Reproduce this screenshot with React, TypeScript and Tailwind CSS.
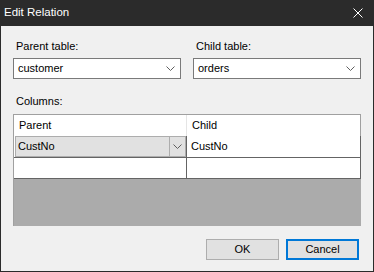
import React from "react";

function Chevron({ className = "" }: { className?: string }) {
    return (
        <svg width="9" height="5" viewBox="0 0 9 5" className={className}>
            <polyline points="0.5,0.5 4.5,4.5 8.5,0.5" fill="none" stroke="#5f5f5f" strokeWidth="1" />
        </svg>
    );
}

function Combo({ value }: { value: string }) {
    return (
        <div className="h-[21px] bg-white border border-[#7a7a7a] flex items-center justify-between pl-[4px] pr-[5px]">
            <span>{value}</span>
            <Chevron />
        </div>
    );
}

export default function App() {
    return (
        <div className="w-[374px] h-[272px] bg-[#2b2b2b] flex flex-col font-['Liberation_Sans',Arial,sans-serif] text-[11px] text-black">
            {/* title bar */}
            <div className="h-[26px] shrink-0 flex items-center justify-between pl-[4px] pr-[11px] text-white text-[11.5px]">
                <span>Edit Relation</span>
                <svg width="10" height="10" viewBox="0 0 10 10">
                    <path d="M0.5 0.5 L9.5 9.5 M9.5 0.5 L0.5 9.5" stroke="#ffffff" strokeWidth="1" />
                </svg>
            </div>

            <div className="flex-1 bg-[#f0f0f0] mx-[1px] mb-[1px] px-[12px] pt-[13px] flex flex-col">
                <div className="grid grid-cols-2 gap-x-[12px]">
                    <div>
                        <div className="h-[14px] leading-[14px] pl-[3px]">Parent table:</div>
                        <div className="mt-[5px]"><Combo value="customer" /></div>
                    </div>
                    <div>
                        <div className="h-[14px] leading-[14px] pl-[3px]">Child table:</div>
                        <div className="mt-[5px]"><Combo value="orders" /></div>
                    </div>
                </div>

                <div className="mt-[15px] h-[14px] leading-[14px] pl-[3px]">Columns:</div>

                {/* columns grid */}
                <div className="mt-[6px] h-[112px] w-[348px] bg-[#ababab] border-t border-l border-[#a0a0a0] flex flex-col">
                    <div className="grid grid-cols-[173px_174px] h-[21px] bg-white">
                        <div className="border-r border-[#e5e5e5] pl-[5px] flex items-center">Parent</div>
                        <div className="border-r border-[#a0a0a0] pl-[5px] flex items-center">Child</div>
                    </div>
                    <div className="grid grid-cols-[173px_174px] h-[22px] bg-white border-b border-[#646464]">
                        <div className="border-r border-[#646464] pl-[1px]">
                            <div className="h-full bg-[#e1e1e1] border border-[#adadad] flex items-center justify-between">
                                <span className="pl-[2px]">CustNo</span>
                                <div className="h-full w-[16px] border-l border-[#adadad] flex items-center justify-center">
                                    <Chevron />
                                </div>
                            </div>
                        </div>
                        <div className="border-r border-[#646464] pl-[4px] flex items-center">CustNo</div>
                    </div>
                    <div className="grid grid-cols-[173px_174px] h-[21px] bg-white border-b border-[#646464]">
                        <div className="border-r border-[#646464]"></div>
                        <div className="border-r border-[#646464]"></div>
                    </div>
                </div>

                <div className="mt-[13px] flex justify-end gap-[7px] pr-[2px]">
                    <button className="w-[73px] h-[21px] bg-[#e1e1e1] border border-[#adadad]">OK</button>
                    <button className="w-[73px] h-[21px] bg-[#e1e1e1] border-2 border-[#0078d7]">Cancel</button>
                </div>
            </div>
        </div>
    );
}
